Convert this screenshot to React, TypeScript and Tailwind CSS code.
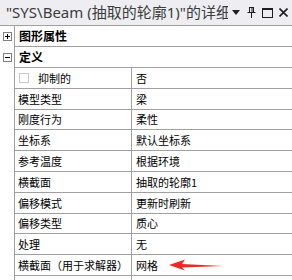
import React from "react";

type Row = { name: string; value: string; h: "a" | "b"; check?: boolean; arrow?: boolean };

const rows: Row[] = [
  { name: "抑制的", value: "否", h: "a", check: true },
  { name: "模型类型", value: "梁", h: "a" },
  { name: "刚度行为", value: "柔性", h: "b" },
  { name: "坐标系", value: "默认坐标系", h: "a" },
  { name: "参考温度", value: "根据环境", h: "a" },
  { name: "横截面", value: "抽取的轮廓1", h: "a" },
  { name: "偏移模式", value: "更新时刷新", h: "a" },
  { name: "偏移类型", value: "质心", h: "b" },
  { name: "处理", value: "无", h: "a" },
  { name: "横截面（用于求解器）", value: "网格", h: "a", arrow: true },
  { name: "", value: "", h: "a" },
];

function ToggleBox({ open }: { open: boolean }) {
  return (
    <svg width="9" height="9" viewBox="0 0 9 9" className="block">
      <rect x="0.5" y="0.5" width="8" height="8" fill="white" stroke="#808080" />
      <line x1="2" y1="4.5" x2="7" y2="4.5" stroke="#000" />
      {!open ? <line x1="4.5" y1="2" x2="4.5" y2="7" stroke="#000" /> : null}
    </svg>
  );
}

function Arrow() {
  return (
    <svg width="60" height="14" viewBox="0 0 60 14" className="absolute left-[36px] top-[3px]">
      <polygon points="1,7 17,1.5 14,6 55,8 14,9.5 17,12.5" fill="#ec2a24" />
    </svg>
  );
}

export default function App() {
  return (
    <div
      className="w-[292px] h-[280px] overflow-hidden bg-white text-black"
      style={{ fontFamily: '"Noto Sans CJK SC", "Noto Sans", sans-serif' }}
    >
      <div className="flex h-[26px] items-center border-b border-[#a0a0a0] bg-[#eeeef2] pl-[6px]">
        <span
          className="w-[222px] overflow-hidden whitespace-nowrap text-[15px] leading-none text-[#3c3c3c]"
          style={{ fontFamily: '"Noto Sans", "Noto Sans CJK SC", sans-serif' }}
        >
          "SYS\Beam (抽取的轮廓1)"的详细
        </span>
        <div className="flex items-center pl-[4px] text-[#1e1e1e]">
          <svg width="8" height="5" viewBox="0 0 8 5">
            <polygon points="0,0 8,0 4,5" fill="#1e1e1e" />
          </svg>
          <svg width="9" height="11" viewBox="0 0 9 11" className="ml-[7px]">
            <path d="M2 0.5h5M2.5 0.5v5M6.5 0.5v5M5 0.5v5M0.5 5.5h8M4.5 5.5v5.5" stroke="#1e1e1e" fill="none" />
          </svg>
          <svg width="11" height="10" viewBox="0 0 11 10" className="ml-[6px]">
            <rect x="0.5" y="0.5" width="10" height="9" fill="none" stroke="#1e1e1e" />
            <line x1="0" y1="1.5" x2="11" y2="1.5" stroke="#1e1e1e" />
          </svg>
          <svg width="9" height="9" viewBox="0 0 9 9" className="ml-[6px]">
            <path d="M0.5 0.5l8 8M8.5 0.5l-8 8" stroke="#1e1e1e" strokeWidth="1.6" />
          </svg>
        </div>
      </div>

      <div className="flex h-[21px]">
        <div className="flex w-[14px] items-center justify-center">
          <ToggleBox open={false} />
        </div>
        <div className="flex flex-1 items-center border-b border-l border-[#a0a0a0] pl-[4px] text-[12px] font-bold">
          图形属性
        </div>
      </div>
      <div className="flex h-[21px]">
        <div className="flex w-[14px] items-center justify-center">
          <ToggleBox open={true} />
        </div>
        <div className="flex flex-1 items-center border-b border-l border-[#a0a0a0] pl-[4px] text-[12px] font-bold">
          定义
        </div>
      </div>

      {rows.map((r, i) => (
        <div key={i} className={r.h === "a" ? "flex h-[21px]" : "flex h-[20px]"}>
          <div className="w-[14px]" />
          <div className="flex w-[118px] items-center border-b border-l border-r border-[#a0a0a0] pl-[3px] text-[11px]">
            {r.check ? (
              <span className="mr-[9px] ml-[1px] inline-block h-[10px] w-[10px] border border-[#c8c8c8] bg-white" />
            ) : null}
            {r.name}
          </div>
          <div className="relative flex flex-1 items-center border-b border-[#a0a0a0] pl-[4px] text-[11px]">
            {r.value}
            {r.arrow ? <Arrow /> : null}
          </div>
        </div>
      ))}
    </div>
  );
}
